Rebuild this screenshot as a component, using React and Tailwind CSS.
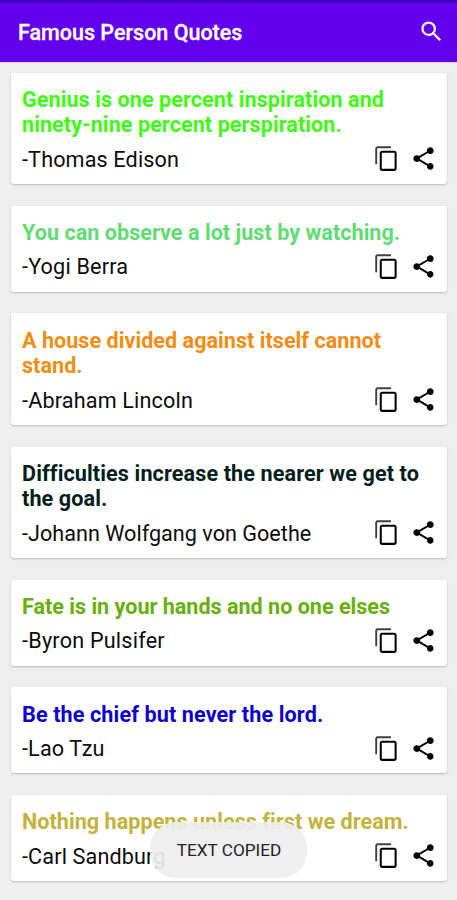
import React from 'react';
import { MdSearch, MdShare } from 'react-icons/md';

const quotes = [
  { id: 1, text: 'Genius is one percent inspiration and ninety-nine percent perspiration.', author: 'Thomas Edison', color: 'text-[#3ffb12]', spacing: 'tracking-[0.06px]', authorSpacing: 'tracking-[0.14px]' },
  { id: 2, text: 'You can observe a lot just by watching.', author: 'Yogi Berra', color: 'text-[#5fdc74]', spacing: 'tracking-[0.02px]', authorSpacing: 'tracking-[0.18px]' },
  { id: 3, text: 'A house divided against itself cannot stand.', author: 'Abraham Lincoln', color: 'text-[#f28d14]', spacing: 'tracking-[0.02px]', authorSpacing: 'tracking-[0.17px]' },
  { id: 4, text: 'Difficulties increase the nearer we get to the goal.', author: 'Johann Wolfgang von Goethe', color: 'text-[#04201c]', spacing: 'tracking-[0.11px]', authorSpacing: 'tracking-[0.02px]' },
  { id: 5, text: 'Fate is in your hands and no one elses', author: 'Byron Pulsifer', color: 'text-[#67b010]', spacing: 'tracking-[-0.02px]', authorSpacing: 'tracking-[0.22px]' },
  { id: 6, text: 'Be the chief but never the lord.', author: 'Lao Tzu', color: 'text-[#0d04cf]', spacing: 'tracking-[0.11px]', authorSpacing: 'tracking-[0.14px]' },
  { id: 7, text: 'Nothing happens unless first we dream.', author: 'Carl Sandburg', color: 'text-[#c4b23c]', spacing: 'tracking-[0.03px]', authorSpacing: 'tracking-[0.14px]' },
];

function CopyIcon() {
  return (
    <svg viewBox="0 0 24 24" fill="currentColor" className="size-[27px]">
      <path opacity="0.75" d="M16 1H4c-1.1 0-2 .9-2 2v14h1.7V2.8H16V1z" />
      <path d="M19 5H8c-1.1 0-2 .9-2 2v14c0 1.1.9 2 2 2h11c1.1 0 2-.9 2-2V7c0-1.1-.9-2-2-2zm.2 16.2H7.8V6.8h11.4v14.4z" />
    </svg>
  );
}

function QuoteCard({ quote }) {
  return (
    <div className="rounded-[3px] bg-white pt-[14.4px] pb-[9.2px] pl-[11px] pr-[10px] shadow-[0_1px_2px_rgba(0,0,0,0.22)]">
      <p className={`text-[21.6px] leading-[25.5px] font-bold ${quote.color} ${quote.spacing}`}>{quote.text}</p>
      <div className="mt-[5px] flex h-[32px] items-center justify-between">
        <span className={`pt-[2px] text-[21.6px] text-[#0c0c0c] ${quote.authorSpacing}`}>-{quote.author}</span>
        <div className="flex items-center gap-[10px] text-black">
          <button type="button" aria-label="Copy"><CopyIcon /></button>
          <button type="button" aria-label="Share"><MdShare className="size-[27px]" /></button>
        </div>
      </div>
    </div>
  );
}

export default function App() {
  return (
    <div className="relative h-[900px] w-[457px] overflow-hidden bg-[#eeeeee] font-[Roboto,sans-serif]">
      {/* App bar */}
      <header className="flex h-[62px] items-center justify-between border-t-2 border-[#3a00b0] bg-[#6200ee] pr-[12px] pl-[18px] text-white shadow-[0_1px_1px_rgba(0,0,0,0.08)]">
        <h1 className="pt-[2px] text-[21.5px] font-medium [-webkit-text-stroke:0.3px_white]">Famous Person Quotes</h1>
        <button type="button" aria-label="Search" className="-mt-[1px]"><MdSearch className="size-[27px]" /></button>
      </header>

      {/* Quote list */}
      <main className="flex flex-col gap-[21.6px] pt-[10.5px] pr-[10px] pl-[11px]">
        {quotes.map(quote => <QuoteCard key={quote.id} quote={quote} />)}
      </main>

      {/* Toast */}
      <div className="absolute top-[822px] left-[150px] flex h-[56px] w-[157px] items-center justify-center rounded-[26px] bg-[#eeeeee]/93 pt-[2px] pl-[1px] text-[17.2px] text-[#222222]">
        TEXT COPIED
      </div>
    </div>
  );
}
